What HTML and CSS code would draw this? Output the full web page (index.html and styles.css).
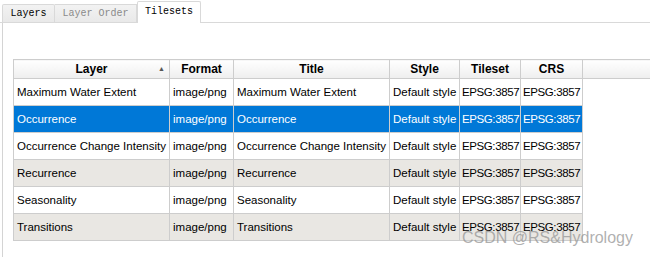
FILE: index.html
```html
<!DOCTYPE html>
<html>
<head>
<meta charset="utf-8">
<link rel="stylesheet" href="styles.css">
</head>
<body>
<div class="tabs">
  <div class="tab first">Layers</div>
  <div class="tab disabled">Layer Order</div>
  <div class="tab active">Tilesets</div>
</div>
<div class="panel">
  <table class="grid">
    <colgroup>
      <col class="c1"><col class="c2"><col class="c3"><col class="c4"><col class="c5"><col class="c6"><col>
    </colgroup>
    <thead>
      <tr>
        <th class="sorted">Layer<span class="arrow">▲</span></th>
        <th>Format</th>
        <th>Title</th>
        <th>Style</th>
        <th>Tileset</th>
        <th>CRS</th>
        <th class="filler"></th>
      </tr>
    </thead>
    <tbody>
      <tr><td>Maximum Water Extent</td><td>image/png</td><td>Maximum Water Extent</td><td>Default style</td><td class="code">EPSG:3857</td><td class="code">EPSG:3857</td><td class="empty"></td></tr>
      <tr class="selected"><td>Occurrence</td><td>image/png</td><td>Occurrence</td><td>Default style</td><td class="code">EPSG:3857</td><td class="code">EPSG:3857</td><td class="empty"></td></tr>
      <tr><td>Occurrence Change Intensity</td><td>image/png</td><td>Occurrence Change Intensity</td><td>Default style</td><td class="code">EPSG:3857</td><td class="code">EPSG:3857</td><td class="empty"></td></tr>
      <tr class="alt"><td>Recurrence</td><td>image/png</td><td>Recurrence</td><td>Default style</td><td class="code">EPSG:3857</td><td class="code">EPSG:3857</td><td class="empty"></td></tr>
      <tr><td>Seasonality</td><td>image/png</td><td>Seasonality</td><td>Default style</td><td class="code">EPSG:3857</td><td class="code">EPSG:3857</td><td class="empty"></td></tr>
      <tr class="alt"><td>Transitions</td><td>image/png</td><td>Transitions</td><td>Default style</td><td class="code">EPSG:3857</td><td class="code">EPSG:3857</td><td class="empty"></td></tr>
    </tbody>
  </table>
  <div class="watermark">CSDN @RS&amp;Hydrology</div>
</div>
</body>
</html>
```
FILE: styles.css
```css
html, body {
  margin: 0;
  padding: 0;
  background: #ffffff;
  width: 650px;
  height: 257px;
  overflow: hidden;
}
.tabs {
  display: flex;
  align-items: flex-end;
  height: 22px;
  padding-left: 2px;
  border-bottom: 1px solid #d9d9d9;
  box-sizing: content-box;
}
.tab {
  font-family: "Liberation Mono", monospace;
  font-size: 10px;
  height: 18px;
  line-height: 18px;
  box-sizing: border-box;
  border: 1px solid #d9d9d9;
  border-bottom: none;
  background: linear-gradient(#f2f2f2, #e9e9e9);
  color: #000;
  text-align: center;
}
.tab.first { width: 53px; border-radius: 2px 2px 0 0; }
.tab.disabled { width: 82px; color: #8a8a8a; border-left: none; }
.tab.active {
  width: 64px;
  height: 22px;
  line-height: 20px;
  background: #ffffff;
  margin-bottom: -1px;
  border-radius: 2px 2px 0 0;
}
.panel {
  position: relative;
  height: 234px;
  margin-left: 2px;
  border-left: 1px solid #d4d4d4;
  padding-top: 36px;
  padding-left: 10px;
  box-sizing: border-box;
}
.grid {
  border-collapse: collapse;
  table-layout: fixed;
  width: 638px;
  font-family: "Liberation Sans", Arial, sans-serif;
  font-size: 11.5px;
  color: #000;
}
.c1 { width: 156px; }
.c2 { width: 64px; }
.c3 { width: 156px; }
.c4 { width: 70px; }
.c5 { width: 61px; }
.c6 { width: 62px; }
.grid th {
  height: 18px;
  padding: 0;
  font-size: 12px;
  font-weight: bold;
  text-align: center;
  background: linear-gradient(#ffffff, #eeeeee);
  border: 1px solid #cdcdcd;
  position: relative;
  white-space: nowrap;
}
.grid th.filler { border-right: none; }
.arrow {
  position: absolute;
  right: 4px;
  top: 5px;
  font-size: 7px;
  color: #555;
}
.grid td {
  height: 26px;
  padding: 0 0 0 3px;
  border: 1px solid #cdcdcd;
  white-space: nowrap;
  overflow: hidden;
  background: #ffffff;
}
.grid td.code { letter-spacing: -0.4px; padding-left: 2px; }
.grid tr.alt td { background: #e9e7e3; }
.grid tr.selected td { background: #0078d7; color: #ffffff; }
.grid tr td.empty { background: transparent; border: none; }
.watermark {
  position: absolute;
  left: 459px;
  top: 206px;
  font-family: "Liberation Sans", Arial, sans-serif;
  font-size: 16px;
  color: rgba(150, 150, 150, 0.75);
  white-space: nowrap;
}
```
